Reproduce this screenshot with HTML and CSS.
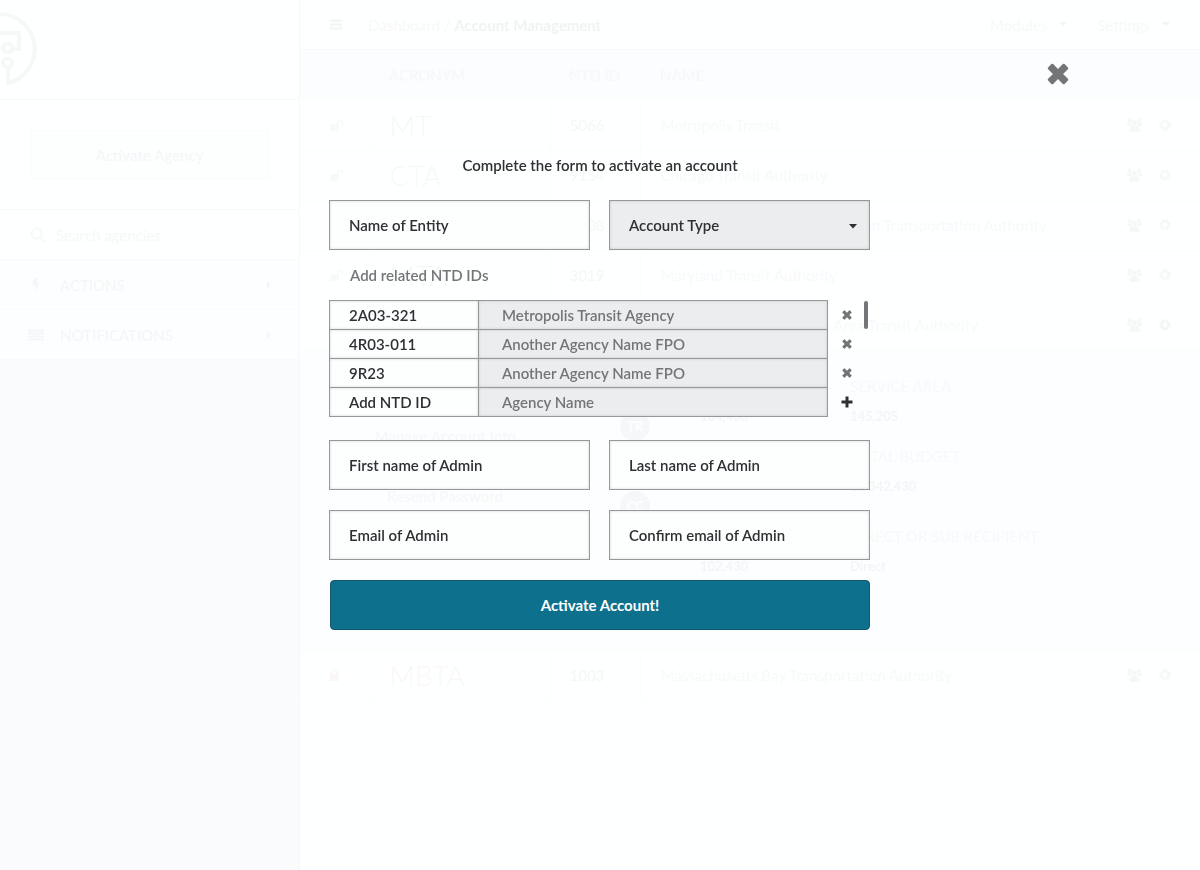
FILE: index.html
```html
<!DOCTYPE html>
<html lang="en">
<head>
<meta charset="utf-8">
<meta name="viewport" content="width=device-width, initial-scale=1">
<title>Account Management</title>
<link rel="stylesheet" href="styles.css">
</head>
<body>
<svg class="sprite" aria-hidden="true">
  <symbol id="times" viewBox="0 0 20 20"><path d="M5.6 1 10 5.4 14.400 1Q15.200 .2 16 1L19 4Q19.800 4.800 19 5.600L14.600 10 19 14.400Q19.800 15.200 19 16L16 19Q15.200 19.800 14.400 19L10 14.600 5.600 19Q4.800 19.800 4 19L1 16Q.2 15.200 1 14.400L5.400 10 1 5.600Q.2 4.800 1 4L4 1Q4.800 .2 5.600 1Z" fill="currentColor"/></symbol>
  <symbol id="plus" viewBox="0 0 12 12"><path d="M4.500.5h3v4h4v3h-4v4h-3v-4h-4v-3h4z" fill="currentColor"/></symbol>
  <symbol id="caret" viewBox="0 0 8 5"><path d="M0 0h8L4 4.500z" fill="currentColor"/></symbol>
  <symbol id="users" viewBox="0 0 15 14"><g fill="currentColor"><circle cx="3" cy="2.500" r="2"/><circle cx="12" cy="2.500" r="2"/><circle cx="7.500" cy="5" r="2.700"/><path d="M0 8V6q0-1.500 1.500-1.500h2.300q0 2 1.300 3.500zM15 8V6q0-1.500-1.500-1.500h-2.300q0 2-1.300 3.500zM2.500 14v-3q0-2.700 2.500-2.700h5q2.500 0 2.500 2.700v3z"/></g></symbol>
  <symbol id="gear" viewBox="0 0 12 12"><g fill="none" stroke="currentColor"><circle cx="6" cy="6" r="3.500" stroke-width="2.200"/><circle cx="6" cy="6" r="5.200" stroke-width="1.600" stroke-dasharray="2 2.080"/></g></symbol>
  <symbol id="unlock" viewBox="0 0 14 12"><rect x="0" y="5" width="9" height="7" rx="1" fill="currentColor"/><path d="M7.500 5.500V3.500a2.500 2.500 0 0 1 5 0V6" fill="none" stroke="currentColor" stroke-width="1.600"/></symbol>
  <symbol id="lock" viewBox="0 0 14 12"><rect x="0" y="5" width="9" height="7" rx="1" fill="currentColor"/><path d="M2 5.500V3.500a2.500 2.500 0 0 1 5 0v2" fill="none" stroke="currentColor" stroke-width="1.600"/></symbol>
</svg>

<div class="app">
  <aside class="sidebar">
    <div class="brand">
      <svg class="logo" width="38" height="76" viewBox="0 0 38 76" fill="none" stroke="currentColor" stroke-width="4"><path d="M0 3A35 35 0 0 1 8 72V57M0 22H19V38H13"/><circle cx="7.500" cy="37" r="4.500"/><circle cx="7.500" cy="52" r="4.500"/></svg>
    </div>
    <div class="agency"><button class="agency-button" type="button">Activate Agency</button></div>
    <label class="side-row search">
      <svg width="16" height="16" viewBox="0 0 16 16" fill="none" stroke="currentColor" stroke-width="2"><circle cx="6.500" cy="6.500" r="5"/><path d="M10 10l5 5"/></svg>
      <input type="search" placeholder="Search agencies" aria-label="Search agencies">
    </label>
    <a class="side-row" href="#actions">
      <svg width="16" height="14" viewBox="0 0 16 14"><path d="M6 0h4L8.500 4.500H12L6 14 7.300 7.500H4z" fill="currentColor"/></svg>
      <span>ACTIONS</span>
      <svg class="arrow" width="4" height="8" viewBox="0 0 4 8"><path d="M0 0l4 4-4 4z" fill="currentColor"/></svg>
    </a>
    <a class="side-row" href="#notifications">
      <svg width="16" height="12" viewBox="0 0 16 12"><path d="M0 1.500h16M0 4.500h16M0 7.500h16M0 10.500h16" stroke="currentColor" stroke-width="2"/></svg>
      <span>NOTIFICATIONS</span>
      <svg class="arrow" width="4" height="8" viewBox="0 0 4 8"><path d="M0 0l4 4-4 4z" fill="currentColor"/></svg>
    </a>
  </aside>

  <main class="main">
    <header class="topbar">
      <svg class="burger" width="12" height="11" viewBox="0 0 12 11"><path d="M0 1.500h12M0 5.500h12M0 9.500h12" stroke="currentColor" stroke-width="2"/></svg>
      <nav class="crumbs"><a href="#dashboard">Dashboard</a> / <strong>Account Management</strong></nav>
      <a class="menu" href="#modules">Modules <svg width="8" height="5"><use href="#caret"/></svg></a>
      <a class="menu" href="#settings">Settings <svg width="8" height="5"><use href="#caret"/></svg></a>
    </header>
    <table class="agencies">
      <colgroup><col class="c-lock"><col class="c-acronym"><col class="c-id"><col></colgroup>
      <thead><tr><th></th><th>ACRONYM</th><th>NTD ID</th><th>NAME</th></tr></thead>
      <tbody>
        <tr><td class="open"><svg width="14" height="12"><use href="#unlock"/></svg></td><td class="acronym">MT</td><td class="id">5066</td><td><div class="name">Metropolis Transit <span class="tools"><svg width="15" height="14"><use href="#users"/></svg><svg width="12" height="12"><use href="#gear"/></svg></span></div></td></tr>
        <tr><td class="open"><svg width="14" height="12"><use href="#unlock"/></svg></td><td class="acronym">CTA</td><td class="id">9154</td><td><div class="name">Chicago Transit Authority <span class="tools"><svg width="15" height="14"><use href="#users"/></svg><svg width="12" height="12"><use href="#gear"/></svg></span></div></td></tr>
        <tr><td></td><td></td><td class="id">5008</td><td><div class="name">Los Angeles County Metropolitan Transportation Authority <span class="tools"><svg width="15" height="14"><use href="#users"/></svg><svg width="12" height="12"><use href="#gear"/></svg></span></div></td></tr>
        <tr><td class="open"><svg width="14" height="12"><use href="#unlock"/></svg></td><td class="acronym">MTA</td><td class="id">3019</td><td><div class="name">Maryland Transit Authority <span class="tools"><svg width="15" height="14"><use href="#users"/></svg><svg width="12" height="12"><use href="#gear"/></svg></span></div></td></tr>
        <tr><td></td><td></td><td></td><td><div class="name">Washington Metropolitan Area Transit Authority <span class="tools"><svg width="15" height="14"><use href="#users"/></svg><svg class="active" width="12" height="12"><use href="#gear"/></svg></span></div></td></tr>
        <tr class="detail"><td colspan="4"><div class="detail-grid">
          <div class="links"><a href="#manage">Manage Account Info</a><a href="#resend">Resend Password</a></div>
          <div class="people"><span>TR</span><span>CC</span></div>
          <dl class="stats"><dt></dt><dd>104,430</dd><dt></dt><dd></dd><dt class="wide"></dt><dd>102,430</dd></dl>
          <dl class="stats"><dt>SERVICE AREA</dt><dd>145,205</dd><dt>TOTAL BUDGET</dt><dd>$1,342,430</dd><dt class="wide">DIRECT OR SUB RECIPIENT</dt><dd>Direct</dd></dl>
        </div></td></tr>
        <tr><td class="locked"><svg width="14" height="12"><use href="#lock"/></svg></td><td class="acronym locked">MBTA</td><td class="id">1003</td><td><div class="name">Massachusetts Bay Transportation Authority <span class="tools"><svg width="15" height="14"><use href="#users"/></svg><svg width="12" height="12"><use href="#gear"/></svg></span></div></td></tr>
      </tbody>
    </table>
  </main>
</div>

<div class="overlay" role="dialog" aria-modal="true" aria-labelledby="form-title">
  <button class="close" type="button" aria-label="Close"><svg width="22" height="22"><use href="#times"/></svg></button>
  <form class="form">
    <h1 id="form-title">Complete the form to activate an account</h1>
    <div class="fields">
      <input class="field" type="text" placeholder="Name of Entity" aria-label="Name of Entity">
      <div class="select">
        <select class="field" aria-label="Account Type"><option>Account Type</option></select>
        <svg width="8" height="5"><use href="#caret"/></svg>
      </div>
    </div>
    <h2>Add related NTD IDs</h2>
    <div class="ids">
      <div class="id-rows">
        <div class="id-row"><input type="text" value="2A03-321" aria-label="NTD ID"><input type="text" value="Metropolis Transit Agency" aria-label="Agency Name" readonly><button type="button" aria-label="Remove"><svg width="10" height="10"><use href="#times"/></svg></button></div>
        <div class="id-row"><input type="text" value="4R03-011" aria-label="NTD ID"><input type="text" value="Another Agency Name FPO" aria-label="Agency Name" readonly><button type="button" aria-label="Remove"><svg width="10" height="10"><use href="#times"/></svg></button></div>
        <div class="id-row"><input type="text" value="9R23" aria-label="NTD ID"><input type="text" value="Another Agency Name FPO" aria-label="Agency Name" readonly><button type="button" aria-label="Remove"><svg width="10" height="10"><use href="#times"/></svg></button></div>
        <div class="id-row"><input type="text" placeholder="Add NTD ID" aria-label="Add NTD ID"><input type="text" placeholder="Agency Name" aria-label="Agency Name" readonly><button class="add" type="button" aria-label="Add"><svg width="12" height="12"><use href="#plus"/></svg></button></div>
      </div>
      <span class="thumb"></span>
    </div>
    <div class="fields">
      <input class="field" type="text" placeholder="First name of Admin" aria-label="First name of Admin">
      <input class="field" type="text" placeholder="Last name of Admin" aria-label="Last name of Admin">
      <input class="field" type="email" placeholder="Email of Admin" aria-label="Email of Admin">
      <input class="field" type="email" placeholder="Confirm email of Admin" aria-label="Confirm email of Admin">
    </div>
    <button class="submit" type="submit">Activate Account!</button>
  </form>
</div>
</body>
</html>
```
FILE: styles.css
```css
* { box-sizing: border-box; }
body { margin: 0; background: #fff; color: #2f3034; font: 500 15px/20px Lato, "Open Sans", sans-serif; }
a { color: inherit; text-decoration: none; }
input, select, button { font: inherit; color: inherit; margin: 0; border-radius: 0; }
button { padding: 0; border: 0; background: none; }
svg { display: block; flex: none; }
.sprite { display: none; }

/* Page under the dialog */
.app { display: grid; grid-template-columns: 300px 1fr; min-height: 100vh; color: #777a88; }
.sidebar { background: #b5bde0; border-right: 1px solid #98a0b4; }
.brand { height: 100px; padding-top: 11px; background: #fff; border-bottom: 1px solid #a4b4b4; color: #84889c; }
.agency { padding: 30px; background: #fff; border-bottom: 1px solid #a4b4b4; }
.agency-button { width: 100%; height: 49px; border: 1px solid #c0c8dc; background: #f0f4fc; color: #7c8090; font-weight: 600; }
.side-row { display: flex; align-items: center; gap: 14px; height: 50px; padding: 0 28px; background: #f0f0fc; border-bottom: 1px solid #b4bccc; }
.side-row span { flex: 1; padding-left: 2px; }
.search { background: #fff; gap: 10px; color: #9098a8; }
.search svg { margin-left: 2px; }
.search input { flex: 1; min-width: 0; padding: 0; border: 0; background: none; }
.search input::placeholder { color: #9098a8; opacity: 1; }
.topbar { display: flex; align-items: center; height: 50px; padding: 0 30px; border-bottom: 1px solid #a8b8b8; color: #9aa0a8; }
.burger { margin-right: 26px; color: #555; }
.crumbs { flex: 1; }
.crumbs strong { color: #4c4c50; font-weight: 700; }
.menu { display: flex; align-items: center; gap: 12px; margin-left: 30px; }
.menu svg { color: #666; }
.agencies { width: 100%; table-layout: fixed; border-collapse: collapse; }
.c-lock { width: 70px; }
.c-acronym { width: 180px; }
.c-id { width: 90px; }
.agencies th { height: 50px; padding: 0 19px; text-align: left; font-weight: 500; white-space: nowrap; background: #dcdcf4; color: #9098a8; }
.agencies td { height: 50px; padding: 0 19px; border-bottom: 1px solid #c4ccd8; border-right: 1px solid #ccd4dc; }
.agencies td:first-child { padding-left: 30px; }
.agencies th:last-child, .agencies td:last-child { border-right: 0; padding: 0 20px; }
.agencies .acronym { font-size: 28px; font-weight: 300; color: #7c9494; }
.open { color: #98b4b4; }
.agencies .locked { color: #b48c98; }
.id { color: #85898c; }
.name { display: flex; align-items: center; justify-content: space-between; padding-right: 9px; color: #a0a8bc; white-space: nowrap; }
.tools { display: flex; align-items: center; gap: 17px; color: #8488a0; }
.tools .active { color: #606470; }
.agencies .detail > td { height: 300px; padding: 0 30px; vertical-align: top; background: #f0f2f8; }
.detail-grid { display: grid; grid-template-columns: 230px 140px 150px 1fr; }
.links { display: flex; flex-direction: column; gap: 40px; padding-top: 75px; text-align: center; font-weight: 600; color: #8c90a0; }
.people { display: flex; flex-direction: column; gap: 50px; padding: 60px 0 0 60px; }
.people span { width: 30px; height: 30px; border-radius: 50%; background: #9094a4; color: #fff; text-align: center; font-size: 13px; font-weight: 700; line-height: 30px; }
.stats { margin: 0; padding-top: 25px; }
.stats dt { height: 20px; color: #a0a4b8; }
.stats dd { height: 20px; margin: 10px 0 20px; color: #707480; font-size: 13px; font-weight: 700; }
.stats .wide { margin-top: 30px; }

/* Dialog */
.overlay { position: fixed; inset: 0; overflow: auto; background: rgba(254, 255, 255, .93); }
.close { position: absolute; top: 63px; left: calc(50% + 447px); color: #747579; }
.form { width: 100%; max-width: 540px; margin: 0 auto; padding: 155px 0 40px; font-weight: 600; }
.form h1, .form h2 { margin: 0; font-size: 15px; line-height: 20px; font-weight: 600; }
.form h1 { margin-bottom: 25px; text-align: center; }
.form h2 { margin: 15px 0; padding-left: 20px; color: #747579; }
.fields { display: grid; grid-template-columns: 1fr 1fr; gap: 20px 19px; margin-left: -1px; }
.field, .id-row input { width: 100%; min-width: 0; border: 1px solid #97989b; background: #fdfefe; padding: 0 19px; box-shadow: inset 0 0 3px rgba(0, 0, 0, .16); }
.field { height: 50px; }
.form input::placeholder { color: inherit; opacity: 1; }
.select { position: relative; }
.select .field { appearance: none; background: #ecedef; }
.select svg { position: absolute; right: 13px; top: 24px; pointer-events: none; }
.ids { display: grid; grid-template-columns: 1fr 4px; column-gap: 6px; margin: 0 2px 23px -1px; }
.id-row { display: grid; grid-template-columns: 150px 349px 1fr; height: 29px; }
.id-row input { height: 30px; }
.id-row input + input { width: auto; margin-left: -1px; padding-left: 23px; background: #ecedef; color: #747579; }
.id-row button { display: flex; align-items: center; justify-content: center; padding-left: 7px; color: #747579; }
.id-row .add { color: #2f3034; }
.id-rows { padding-bottom: 1px; }
.thumb { height: 28px; margin-top: 1px; border-radius: 2px; background: #747579; }
.submit { width: 100%; height: 50px; margin-top: 20px; border: 1px solid #15586c; border-radius: 4px; background: #0d708d; color: #fff; font-weight: 700; }
```
